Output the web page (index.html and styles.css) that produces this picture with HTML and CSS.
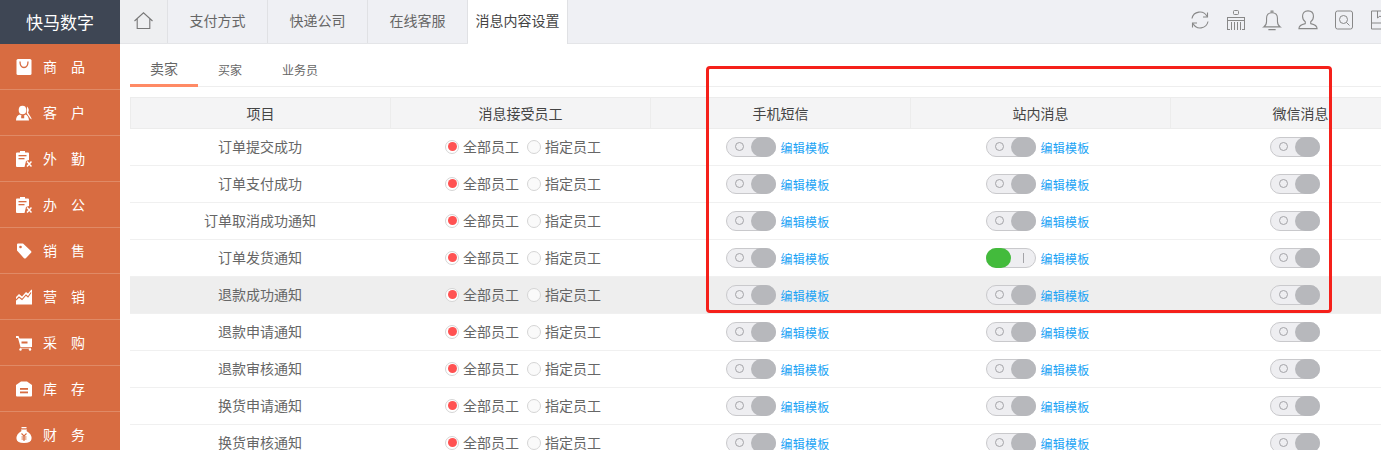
FILE: index.html
```html
<!DOCTYPE html>
<html lang="zh">
<head>
<meta charset="utf-8">
<title>消息内容设置</title>
<link rel="stylesheet" href="styles.css">
</head>
<body>
<div class="app">
  <aside class="sidebar">
    <div class="logo">快马数字</div>
    <nav class="side-nav">
      <a class="side-item"><svg class="side-icon" viewBox="0 0 16 16"><path d="M2 0h12q1.500 0 1.500 1.500v13q0 1.500-1.500 1.500H2q-1.500 0-1.500-1.500v-13Q.5 0 2 0z" fill="#fff"/><path d="M4 2.500q0 6 4 6t4-6" fill="none" stroke="#d86c41" stroke-width="1.300"/></svg><span class="side-label">商品</span></a>
      <a class="side-item"><svg class="side-icon" viewBox="0 0 16 16"><ellipse cx="6.500" cy="5" rx="3.800" ry="4.300" fill="#fff"/><path d="M0 15.500q0-5 4-6l2 1.500h1.500l2-1.500q3 1 3.500 6z" fill="#fff"/><path d="M11 1.500q3 3 1 6l3 5 .8 2-1.500-1-3.500-5z" fill="#fff"/><rect x="5.200" y="10.800" width="3" height="2.500" fill="#d86c41"/></svg><span class="side-label">客户</span></a>
      <a class="side-item"><svg class="side-icon" viewBox="0 0 16 16"><use href="#clip"/></svg><span class="side-label">外勤</span></a>
      <a class="side-item"><svg class="side-icon" viewBox="0 0 16 16"><use href="#clip"/></svg><span class="side-label">办公</span></a>
      <a class="side-item"><svg class="side-icon" viewBox="0 0 16 16"><path d="M1 1.500Q1 .500 2 .500h5l8 7.500q.8 1 0 1.800l-5.200 5.400q-1 .8-1.800 0L1 7.500z" fill="#fff"/><circle cx="4.500" cy="4" r="1.300" fill="#d86c41"/></svg><span class="side-label">销售</span></a>
      <a class="side-item"><svg class="side-icon" viewBox="0 0 16 16"><path d="M0 15.500V8l3-3 3 2.500 4-4.500 2 1.500L15 1l1-.5v15z" fill="#fff"/><path d="M0 11l3-3 3 2.500 4-4.500 2 2 3-4.500" fill="none" stroke="#d86c41" stroke-width="1.100"/></svg><span class="side-label">营销</span></a>
      <a class="side-item"><svg class="side-icon" viewBox="0 0 16 16"><path d="M0 1h2.500l1 2.500H16v8.500H4.500L2 3H0z" fill="#fff"/><rect x="5.500" y="6.500" width="6" height="2" fill="#d86c41"/><circle cx="4.500" cy="14.500" r="1.200" fill="#fff"/><circle cx="14" cy="14.500" r="1.200" fill="#fff"/><rect x="4" y="12.800" width="11" height=".7" fill="#fff"/></svg><span class="side-label">采购</span></a>
      <a class="side-item"><svg class="side-icon" viewBox="0 0 16 16"><path d="M5 .5h6L16 4v10.500q0 1-1 1H1q-1 0-1-1V4z" fill="#fff"/><rect x="4" y="7" width="8" height="1.800" fill="#d86c41"/><rect x="4" y="10.500" width="8" height="1.800" fill="#d86c41"/></svg><span class="side-label">库存</span></a>
      <a class="side-item"><svg class="side-icon" viewBox="0 0 16 16"><rect x="5.500" y="0" width="5" height="1.300" fill="#fff"/><path d="M5 2.500h6L10.500 4Q16 7 15.500 12q-.5 4-7.500 4T.5 12Q0 7 5.500 4z" fill="#fff"/><path d="M5.500 6.500L8 9l2.500-2.500M8 9v5M5.500 10h5M5.500 12h5" fill="none" stroke="#d86c41" stroke-width="1.100"/></svg><span class="side-label">财务</span></a>
    </nav>
  </aside>

  <main class="main">
    <header class="topbar">
      <a class="home-tab"><svg width="19" height="17" viewBox="0 0 19 17"><path d="M.5 9L9.500.8l9 8.200M3.200 7v9.500h12.600V7" fill="none" stroke="#777" stroke-width="1.100"/></svg></a>
      <a class="top-tab">支付方式</a>
      <a class="top-tab">快递公司</a>
      <a class="top-tab">在线客服</a>
      <a class="top-tab active">消息内容设置</a>
      <div class="tools">
        <svg width="20" height="20" viewBox="0 0 20 20"><path d="M2 8.500A8 8 0 0 1 17 6.500M18 11.500A8 8 0 0 1 3 13.500" fill="none" stroke="#888" stroke-width="1.100"/><path d="M17.500 2.500v4.500h-4.500M2.500 17.500V13h4.500" fill="none" stroke="#888" stroke-width="1.100"/></svg>
        <svg width="20" height="22" viewBox="0 0 20 22"><rect x="7.500" y="1.500" width="5" height="4" rx="1" fill="none" stroke="#888"/><path d="M1 8.500h18M1.500 8.500v12M18.500 8.500v12M1 11.500h18M5.500 13v8M8.500 13v8M11.500 13v8M14.500 13v8M1 20.500h3M16 20.500h3" fill="none" stroke="#888"/></svg>
        <svg width="20" height="21" viewBox="0 0 22 23"><path d="M2 18.500q3-2 3-6V9q0-6 6-6t6 6v3.500q0 4 3 6z" fill="none" stroke="#888" stroke-width="1.200"/><path d="M10 3V1h2v2M7 21.500h8" fill="none" stroke="#888" stroke-width="1.200"/></svg>
        <svg width="20" height="20" viewBox="0 0 22 22"><path d="M1 20.500q0-4 7-5.500v-2q-3-2-3-6 0-6 6-6t6 6q0 4-3 6v2q7 1.500 7 5.500z" fill="none" stroke="#888" stroke-width="1.200"/></svg>
        <svg width="20" height="20" viewBox="0 0 19 20"><rect x="1" y="1" width="17" height="18" rx="2" fill="none" stroke="#888"/><circle cx="9" cy="9.500" r="4" fill="none" stroke="#888"/><path d="M12 12.500l3 3" stroke="#888"/></svg>
        <svg width="20" height="20" viewBox="0 0 19 20"><path d="M1 1h17v18H1zM1 13h17M7 1v7l2.500-2L12 8V1" fill="none" stroke="#888"/></svg>
      </div>
    </header>

    <div class="content">
      <div class="sub-tabs">
        <a class="sub-tab active">卖家</a>
        <a class="sub-tab">买家</a>
        <a class="sub-tab">业务员</a>
      </div>
      <table class="grid">
        <thead>
          <tr><th>项目</th><th>消息接受员工</th><th>手机短信</th><th>站内消息</th><th class="wx-head">微信消息</th></tr>
        </thead>
        <tbody id="rows"></tbody>
      </table>
    </div>
  </main>
  <div class="red-box"></div>
</div>

<svg class="defs" width="0" height="0"><defs><g id="clip"><path d="M1 1.500h3V0h5v1.500h3q1 0 1 1V9l-3 1-1.500 6H1q-1 0-1-1V2.500q0-1 1-1z" fill="#fff"/><rect x="2.500" y="4" width="8" height="1.300" fill="#d86c41"/><rect x="2.500" y="7" width="6" height="1.300" fill="#d86c41"/><path d="M11 10.500l4.500 5M15.500 10.500l-4.500 5" stroke="#fff" stroke-width="1.500"/></g></defs></svg>
<script src="app.js"></script>
</body>
</html>
```

FILE: app.js
```js
var names = ['订单提交成功','订单支付成功','订单取消成功通知','订单发货通知','退款成功通知','退款申请通知','退款审核通知','换货申请通知','换货审核通知'];
var html = '';
function sw(on) {
  return '<span class="switch' + (on ? ' on' : '') + '"><i class="mark"></i><i class="knob"></i></span>';
}
names.forEach(function (n, i) {
  html += '<tr' + (i === 4 ? ' class="hover"' : '') + '><td><span class="name">' + n + '</span></td>' +
    '<td><span class="radios"><i class="radio checked"></i><span class="r-text">全部员工</span><i class="radio"></i><span>指定员工</span></span></td>' +
    '<td><span class="op">' + sw(false) + '<a class="link">编辑模板</a></span></td>' +
    '<td><span class="op">' + sw(i === 3) + '<a class="link">编辑模板</a></span></td>' +
    '<td class="wx"><span class="op">' + sw(false) + '</span></td></tr>';
});
document.getElementById('rows').innerHTML = html;
```

FILE: styles.css
```css
* { box-sizing: border-box; }
html, body { margin: 0; height: 100%; overflow: hidden; }
body {
  font-family: "Noto Sans CJK SC", "Liberation Sans", sans-serif;
  font-size: 14px;
  color: #555;
  background: #fff;
}
a { text-decoration: none; color: inherit; }
i { font-style: normal; display: block; }
.defs { position: absolute; }
.app { display: flex; width: 1381px; height: 450px; overflow: hidden; position: relative; }

.sidebar { width: 120px; flex: none; background: #d86c41; }
.logo {
  height: 44px;
  background: #3e4654;
  color: #fff;
  font-size: 17px;
  line-height: 43px;
  text-align: center;
}
.side-item {
  display: flex;
  align-items: center;
  height: 46px;
  padding: 0 0 1px 16px;
  border-bottom: 1px solid #e08a66;
  color: #fff;
}
.side-icon { width: 16px; height: 16px; flex: none; margin: 2px 11px 0 0; }
.side-label { font-size: 14px; letter-spacing: 14px; white-space: nowrap; line-height: 16px; }

.main { flex: 1; min-width: 0; overflow: hidden; }
.topbar {
  display: flex;
  height: 44px;
  background: #eff0f4;
  border-bottom: 1px solid #e4e5e8;
}
.home-tab {
  width: 48px;
  height: 43px;
  display: flex;
  align-items: center;
  justify-content: center;
  background: #eeeff1;
  border-right: 1px solid #e0e1e4;
  padding: 0 0 2px 0;
}
.top-tab {
  width: 100px;
  line-height: 40px;
  text-align: center;
  color: #666;
  font-size: 14px;
  border-right: 1px solid #e0e1e4;
}
.top-tab.active {
  height: 44px;
  background: #fff;
  color: #444;
}
.tools {
  margin-left: auto;
  display: flex;
  align-items: center;
  gap: 16px;
  margin-right: -9px;
  padding-bottom: 3px;
}

.content { padding: 0 0 0 10px; width: 1320px; }
.sub-tabs {
  display: flex;
  height: 43px;
  border-bottom: 1px solid #eeeeee;
  margin-bottom: 10px;
}
.sub-tab {
  padding: 0 20px;
  height: 43px;
  line-height: 51px;
  font-size: 12px;
  color: #666;
}
.sub-tab.active {
  width: 68px;
  font-size: 14px;
  line-height: 49px;
  border-bottom: 3px solid #ff8a65;
  padding: 0;
  text-align: center;
}

.grid { border-collapse: separate; border-spacing: 0; table-layout: fixed; width: 1300px; }
.grid th {
  width: 260px;
  height: 32px;
  background: #f4f4f5;
  border: 1px solid #ececec;
  border-width: 1px 0 1px 1px;
  font-weight: 400;
  font-size: 14px;
  line-height: 28px;
  color: #444;
  padding: 0;
}
.grid td {
  height: 37px;
  padding: 0 0 3px;
  text-align: center;
  font-size: 14px;
  color: #666;
  border-bottom: 1px solid #f0f0f0;
}
.grid tr.hover td { background: #eeeeee; }
.name { display: block; line-height: 20px; }

.radios { display: inline-flex; align-items: center; margin-left: 6px; vertical-align: middle; line-height: 20px; }
.radios span { position: relative; top: -1px; }
.radio {
  width: 14px;
  height: 14px;
  margin-right: 4px;
  border-radius: 50%;
  border: 1px solid #d5d5d5;
  background: #fafafa;
  flex: none;
}
.radio.checked { position: relative; background: #fff; }
.radio.checked::after {
  content: "";
  position: absolute;
  left: 1.5px;
  top: 1.5px;
  width: 9px;
  height: 9px;
  border-radius: 50%;
  background: #ff5252;
}
.r-text { margin-right: 8px; }

.op { display: inline-flex; align-items: center; vertical-align: middle; margin-right: 5px; }
.wx .op { margin-right: 10px; }
.switch {
  position: relative;
  display: block;
  width: 50px;
  height: 20px;
  border-radius: 10px;
  border: 1px solid #c9c9cc;
  background: #eeeef1;
}
.switch .knob {
  position: absolute;
  right: -1px;
  top: -1px;
  width: 25px;
  height: 20px;
  border-radius: 10px;
  background: #b7b8bc;
}
.switch .mark {
  position: absolute;
  left: 8px;
  top: 4px;
  width: 9px;
  height: 9px;
  border-radius: 50%;
  border: 1px solid #a4a4a8;
}
.switch.on .knob { right: auto; left: -1px; background: #43bb3c; }
.switch.on .mark {
  left: auto;
  right: 11px;
  top: 4px;
  width: 1px;
  height: 10px;
  border: 0;
  border-radius: 0;
  background: #a4a4a8;
}
.link { margin-left: 5px; width: 49px; height: 20px; font-size: 12px; color: #1aa3f5; line-height: 22px; letter-spacing: .25px; white-space: nowrap; }

.red-box {
  position: absolute;
  left: 706px;
  top: 66px;
  width: 626px;
  height: 247px;
  border: 3px solid #f5201a;
  border-radius: 4px;
  pointer-events: none;
}
```
